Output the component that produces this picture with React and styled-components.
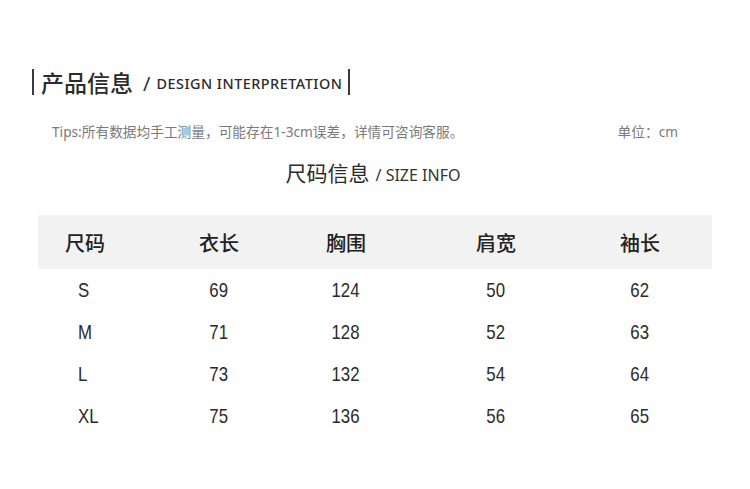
import React from "react";
import styled, { createGlobalStyle } from "styled-components";

const GlobalStyle = createGlobalStyle`
    html, body {
        margin: 0;
        padding: 0;
        background: #ffffff;
    }
    body {
        font-family: "Noto Sans", "Noto Sans CJK SC", sans-serif;
        color: #333333;
    }
`;

const columns = ["尺码", "衣长", "胸围", "肩宽", "袖长"];

const rows = [
    ["S", "69", "124", "50", "62"],
    ["M", "71", "128", "52", "63"],
    ["L", "73", "132", "54", "64"],
    ["XL", "75", "136", "56", "65"],
];

const App = () => {
    return (
        <React.Fragment>
            <GlobalStyle />
            <Page>
                <TitleRow>
                    <Bar />
                    <TitleCn>产品信息</TitleCn>
                    <TitleSlash>/</TitleSlash>
                    <TitleEn>DESIGN INTERPRETATION</TitleEn>
                    <Bar />
                </TitleRow>

                <TipsRow>
                    <Tips>Tips:所有数据均手工测量，可能存在1-3cm误差，详情可咨询客服。</Tips>
                    <Tips>单位：cm</Tips>
                </TipsRow>

                <SizeTitle>
                    <span>尺码信息</span>
                    <small>/ SIZE INFO</small>
                </SizeTitle>

                <Table>
                    <HeadRow>
                        {columns.map((c) => (
                            <HeadCell key={c}>{c}</HeadCell>
                        ))}
                    </HeadRow>
                    {rows.map((r) => (
                        <DataRow key={r[0]}>
                            {r.map((v, i) => (
                                <DataCell key={i} $first={i === 0}>
                                    <Num $first={i === 0}>{v}</Num>
                                </DataCell>
                            ))}
                        </DataRow>
                    ))}
                </Table>
            </Page>
        </React.Fragment>
    );
};

export default App;

const Page = styled.div`
    width: 750px;
    height: 489px;
    box-sizing: border-box;
    padding-top: 67px;
    overflow: hidden;
`;

const TitleRow = styled.div`
    display: flex;
    align-items: center;
    margin-left: 32px;
    height: 30px;
`;

const Bar = styled.div`
    width: 2px;
    height: 26px;
    background: #3a3a3a;
`;

const TitleCn = styled.div`
    font-family: "Noto Sans CJK SC", sans-serif;
    font-size: 23px;
    font-weight: 500;
    color: #2b2b2b;
    margin-left: 7px;
    line-height: 30px;
`;

const TitleSlash = styled.div`
    font-family: "Noto Sans", sans-serif;
    font-size: 20px;
    color: #333333;
    margin: 2px 6px 0 10px;
`;

const TitleEn = styled.div`
    font-family: "Noto Sans", sans-serif;
    font-size: 14.4px;
    font-weight: 500;
    letter-spacing: 0.5px;
    color: #2b2b2b;
    margin: 3px 6px 0 0;
`;

const TipsRow = styled.div`
    display: flex;
    justify-content: space-between;
    padding: 0 72px 0 52px;
    margin-top: 25px;
`;

const Tips = styled.div`
    font-family: "Noto Sans", "Noto Sans CJK SC", sans-serif;
    font-size: 13.7px;
    color: #7a7a7a;
    line-height: 20px;
`;

const SizeTitle = styled.div`
    display: flex;
    justify-content: center;
    align-items: baseline;
    margin-top: 15px;
    padding-right: 4px;
    & > span {
        font-family: "Noto Sans CJK SC", sans-serif;
        font-size: 21px;
        color: #2b2b2b;
    }
    & > small {
        font-family: "Noto Sans", sans-serif;
        font-size: 16px;
        color: #333333;
        margin-left: 6px;
    }
`;

const Table = styled.div`
    margin: 28px 38px 0 38px;
`;

const grid = `
    display: grid;
    grid-template-columns: 94px 174px 80px 220px 68px 1fr;
    align-items: center;
`;

const HeadRow = styled.div`
    ${grid}
    height: 54px;
    background: #f2f2f2;
`;

const HeadCell = styled.div`
    font-family: "Noto Sans CJK SC", sans-serif;
    font-size: 20px;
    font-weight: 500;
    color: #222222;
    text-align: center;
    white-space: nowrap;
`;

const DataRow = styled.div`
    ${grid}
    height: 42px;
`;

const DataCell = styled.div`
    text-align: ${(p) => (p.$first ? "left" : "center")};
    padding-left: ${(p) => (p.$first ? "40px" : "0")};
    white-space: nowrap;
`;

/* narrow digits like the reference's condensed face */
const Num = styled.span`
    display: inline-block;
    font-family: "Liberation Sans", sans-serif;
    font-size: 21px;
    color: #2b2b2b;
    transform: scaleX(0.8);
    transform-origin: ${(p) => (p.$first ? "left center" : "center")};
`;
